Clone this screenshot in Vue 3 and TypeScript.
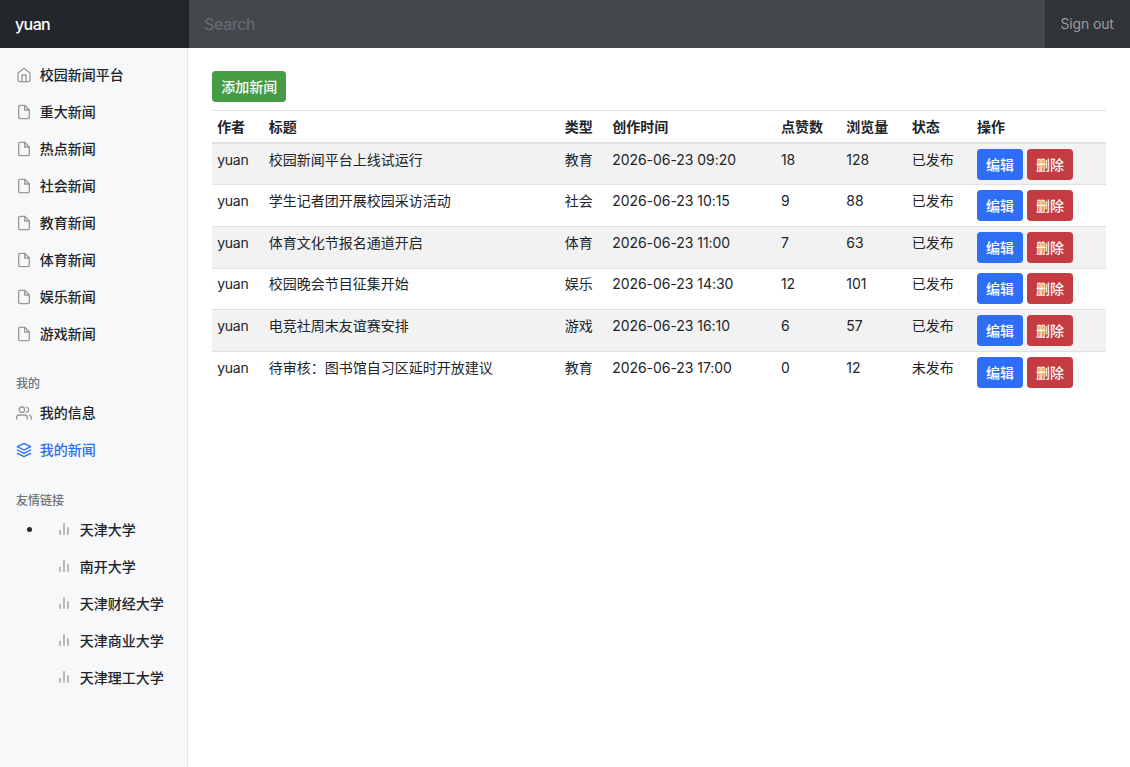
<script setup lang="ts">
interface NewsRow {
  author: string
  title: string
  kind: string
  time: string
  likes: number
  views: number
  status: string
}

const channels: string[] = ['重大新闻', '热点新闻', '社会新闻', '教育新闻', '体育新闻', '娱乐新闻', '游戏新闻']
const schools: string[] = ['天津大学', '南开大学', '天津财经大学', '天津商业大学', '天津理工大学']
const headers: string[] = ['作者', '标题', '类型', '创作时间', '点赞数', '浏览量', '状态', '操作']

const news: NewsRow[] = [
  { author: 'yuan', title: '校园新闻平台上线试运行', kind: '教育', time: '2026-06-23 09:20', likes: 18, views: 128, status: '已发布' },
  { author: 'yuan', title: '学生记者团开展校园采访活动', kind: '社会', time: '2026-06-23 10:15', likes: 9, views: 88, status: '已发布' },
  { author: 'yuan', title: '体育文化节报名通道开启', kind: '体育', time: '2026-06-23 11:00', likes: 7, views: 63, status: '已发布' },
  { author: 'yuan', title: '校园晚会节目征集开始', kind: '娱乐', time: '2026-06-23 14:30', likes: 12, views: 101, status: '已发布' },
  { author: 'yuan', title: '电竞社周末友谊赛安排', kind: '游戏', time: '2026-06-23 16:10', likes: 6, views: 57, status: '已发布' },
  { author: 'yuan', title: '待审核：图书馆自习区延时开放建议', kind: '教育', time: '2026-06-23 17:00', likes: 0, views: 12, status: '未发布' },
]
</script>

<template>
  <div class="page">
    <header class="navbar">
      <a class="brand">yuan</a>
      <input class="search" type="text" placeholder="Search" />
      <a class="signout">Sign out</a>
    </header>
    <div class="body">
      <nav class="sidebar">
        <ul class="nav">
          <li>
            <a class="link">
              <svg class="icon" viewBox="0 0 24 24"><path d="M3 9l9-7 9 7v11a2 2 0 0 1-2 2H5a2 2 0 0 1-2-2z" /><polyline points="9 22 9 12 15 12 15 22" /></svg>
              <span>校园新闻平台</span>
            </a>
          </li>
          <li v-for="c in channels" :key="c">
            <a class="link">
              <svg class="icon" viewBox="0 0 24 24"><path d="M13 2H6a2 2 0 0 0-2 2v16a2 2 0 0 0 2 2h12a2 2 0 0 0 2-2V9z" /><polyline points="13 2 13 9 20 9" /></svg>
              <span>{{ c }}</span>
            </a>
          </li>
        </ul>
        <h6 class="heading">我的</h6>
        <ul class="nav">
          <li>
            <a class="link">
              <svg class="icon" viewBox="0 0 24 24"><path d="M17 21v-2a4 4 0 0 0-4-4H5a4 4 0 0 0-4 4v2" /><circle cx="9" cy="7" r="4" /><path d="M23 21v-2a4 4 0 0 0-3-3.87" /><path d="M16 3.13a4 4 0 0 1 0 7.75" /></svg>
              <span>我的信息</span>
            </a>
          </li>
          <li>
            <a class="link active">
              <svg class="icon" viewBox="0 0 24 24"><polygon points="12 2 2 7 12 12 22 7 12 2" /><polyline points="2 17 12 22 22 17" /><polyline points="2 12 12 17 22 12" /></svg>
              <span>我的新闻</span>
            </a>
          </li>
        </ul>
        <h6 class="heading">友情链接</h6>
        <ul class="nav nested">
          <li v-for="(s, i) in schools" :key="s">
            <span class="marker"><i v-if="i === 0" class="dot"></i></span>
            <a class="link">
              <svg class="icon" viewBox="0 0 24 24"><line x1="18" y1="20" x2="18" y2="10" /><line x1="12" y1="20" x2="12" y2="4" /><line x1="6" y1="20" x2="6" y2="14" /></svg>
              <span>{{ s }}</span>
            </a>
          </li>
        </ul>
      </nav>
      <main class="main">
        <button class="btn success">添加新闻</button>
        <table class="table">
          <colgroup>
            <col class="c-author" />
            <col class="c-title" />
            <col class="c-kind" />
            <col class="c-time" />
            <col class="c-likes" />
            <col class="c-views" />
            <col class="c-status" />
            <col />
          </colgroup>
          <thead>
            <tr><th v-for="h in headers" :key="h">{{ h }}</th></tr>
          </thead>
          <tbody>
            <tr v-for="n in news" :key="n.title">
              <td class="author">{{ n.author }}</td>
              <td>{{ n.title }}</td>
              <td>{{ n.kind }}</td>
              <td class="time">{{ n.time }}</td>
              <td>{{ n.likes }}</td>
              <td>{{ n.views }}</td>
              <td>{{ n.status }}</td>
              <td>
                <div class="actions">
                  <button class="btn primary">编辑</button>
                  <button class="btn danger">删除</button>
                </div>
              </td>
            </tr>
          </tbody>
        </table>
      </main>
    </div>
  </div>
</template>

<style>
body {
  margin: 0;
  background: #fff;
}
</style>

<style scoped>
.page,
.page * {
  box-sizing: border-box;
}
.page {
  height: 767px;
  display: flex;
  flex-direction: column;
  overflow: hidden;
  font-family: Inter, "Noto Sans CJK SC", sans-serif;
  font-size: 14px;
  line-height: 1.5;
  color: #212529;
}
.navbar {
  flex: none;
  display: flex;
  height: 48px;
  background: #343a40;
}
.brand {
  width: 188.6px;
  padding: 12px 15px;
  font-size: 16px;
  line-height: 24px;
  font-weight: 500;
  letter-spacing: -0.6px;
  color: #fff;
  background: #23272b;
}
.search {
  flex: 1;
  min-width: 0;
  padding: 12px 15.5px;
  border: 0;
  outline: 0;
  font-family: inherit;
  font-size: 16px;
  line-height: 24px;
  letter-spacing: -0.35px;
  color: #fff;
  background: #44484d;
}
.search::placeholder {
  color: #686f78;
  opacity: 1;
}
.signout {
  width: 85.5px;
  padding: 13px 0 0 16px;
  letter-spacing: -0.15px;
  color: #9a9c9f;
  background: #303439;
  white-space: nowrap;
}
.body {
  flex: 1;
  display: flex;
  min-height: 0;
}
.sidebar {
  flex: none;
  width: 188.33px;
  padding-top: 8px;
  background: #f7f8fa;
  box-shadow: inset -1px 0 0 #e4e6e8;
}
.nav {
  margin: 0;
  padding: 0;
  list-style: none;
}
.nested li {
  display: flex;
}
.marker {
  display: flex;
  flex: none;
  align-items: center;
  width: 40px;
  height: 37px;
  padding-left: 27.3px;
}
.dot {
  width: 5px;
  height: 5px;
  border-radius: 50%;
  background: #212529;
}
.link {
  display: flex;
  align-items: center;
  height: 37px;
  padding: 0 16px;
  font-weight: 500;
  color: #222529;
  white-space: nowrap;
}
.link span {
  margin-left: -0.3px;
}
.icon {
  flex: none;
  width: 16px;
  height: 16px;
  margin-right: 8px;
  fill: none;
  stroke: #999;
  stroke-width: 2;
  stroke-linecap: round;
  stroke-linejoin: round;
}
.active {
  color: #2c6ef2;
}
.active .icon {
  stroke: #2c6ef2;
}
.heading {
  margin: 25.2px 0 2.8px;
  padding: 0 16px;
  font-size: 12px;
  line-height: 14.4px;
  font-weight: 500;
  color: #6c757d;
}
.main {
  flex: 1;
  padding: 23.3px 24px 0;
}
.btn {
  display: block;
  height: 31px;
  padding: 4px 8px;
  border: 1px solid;
  border-radius: 3.2px;
  font-family: inherit;
  font-size: 14px;
  line-height: 21px;
  font-weight: 500;
  color: #fff;
}
.success {
  background: #469b45;
  border-color: #469b45;
}
.primary {
  background: #2d6ef4;
  border-color: #2d6ef4;
}
.danger {
  background: #c43c42;
  border-color: #c43c42;
}
.actions {
  display: flex;
  gap: 4px;
}
.table {
  width: 100%;
  margin-top: 8px;
  border-collapse: collapse;
  table-layout: fixed;
}
.table th,
.table td {
  padding: 4.8px;
  text-align: left;
  vertical-align: top;
  border-top: 1px solid #dee2e6;
  white-space: nowrap;
}
.table th {
  font-weight: 600;
  border-bottom: 2px solid #dee2e6;
}
.table .author {
  letter-spacing: -0.2px;
}
.table .time {
  letter-spacing: -0.05px;
}
.table tbody tr:nth-child(odd) {
  background: #f2f2f2;
}
.c-author { width: 51.7px; }
.c-title { width: 296px; }
.c-kind { width: 47.4px; }
.c-time { width: 168.7px; }
.c-likes { width: 65.4px; }
.c-views { width: 65.4px; }
.c-status { width: 65.4px; }
</style>
